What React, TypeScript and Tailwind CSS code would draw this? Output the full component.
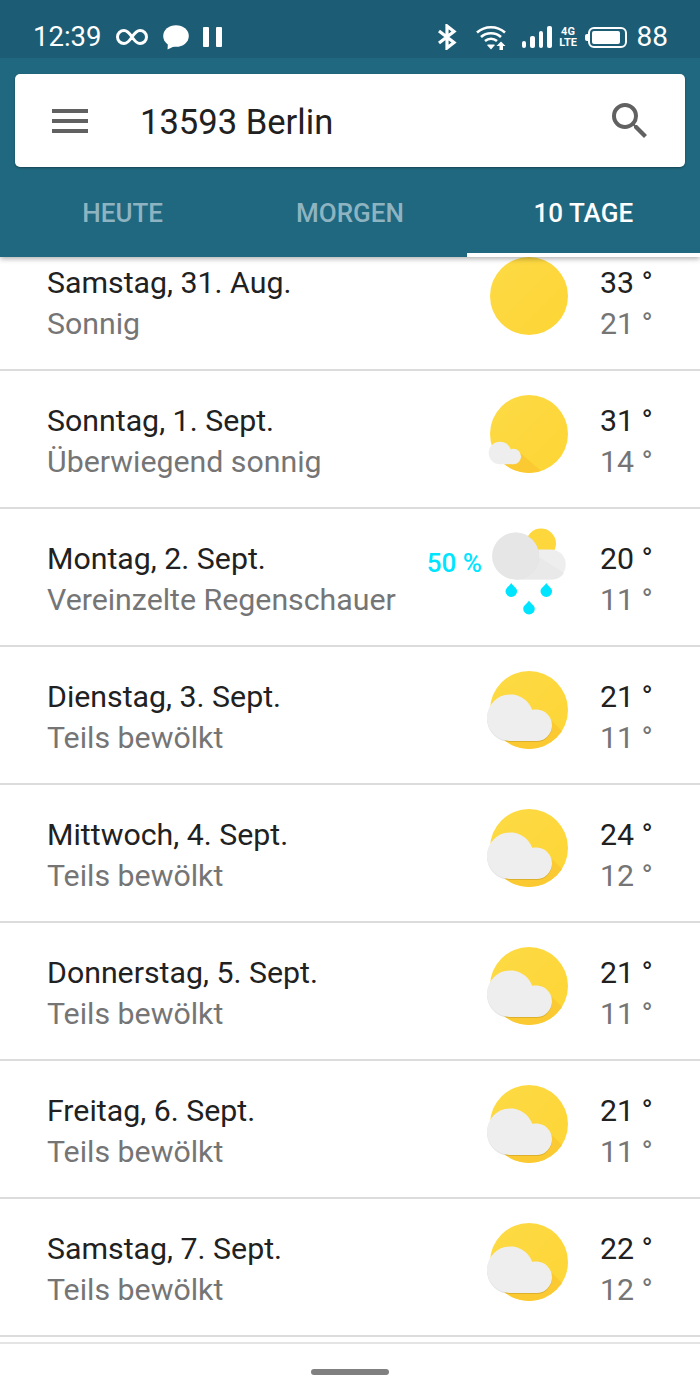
import React from "react";
import { MdMenu, MdSearch } from "react-icons/md";

const days = [
  { t: "Samstag, 31. Aug.", s: "Sonnig", hi: 33, lo: 21, k: "sun" },
  { t: "Sonntag, 1. Sept.", s: "Überwiegend sonnig", hi: 31, lo: 14, k: "mostly" },
  { t: "Montag, 2. Sept.", s: "Vereinzelte Regenschauer", hi: 20, lo: 11, k: "rain", p: "50 %" },
  { t: "Dienstag, 3. Sept.", s: "Teils bewölkt", hi: 21, lo: 11, k: "partly" },
  { t: "Mittwoch, 4. Sept.", s: "Teils bewölkt", hi: 24, lo: 12, k: "partly" },
  { t: "Donnerstag, 5. Sept.", s: "Teils bewölkt", hi: 21, lo: 11, k: "partly" },
  { t: "Freitag, 6. Sept.", s: "Teils bewölkt", hi: 21, lo: 11, k: "partly" },
  { t: "Samstag, 7. Sept.", s: "Teils bewölkt", hi: 22, lo: 12, k: "partly" },
];

function Drop({ x, y }: { x: number; y: number }) {
  return (
    <path
      d={`M${x} ${y - 7} C${x + 2} ${y - 3.5} ${x + 5.8} ${y - 2} ${x + 5.8} ${y + 1.2} A5.8 5.8 0 0 1 ${x - 5.8} ${y + 1.2} C${x - 5.8} ${y - 2} ${x - 2} ${y - 3.5} ${x} ${y - 7}Z`}
      fill="#00e5ff"
    />
  );
}

function Weather({ k, id }: { k: string; id: number }) {
  const grad = `g${id}`;
  const clip = `c${id}`;
  if (k === "rain") {
    return (
      <svg width="90" height="90" viewBox="0 0 90 90" className="shrink-0">
        <circle cx="61" cy="16.5" r="15" fill="#fdd73b" />
        <path d="M36 52.5H70.7A15 15 0 0 0 70.7 22.4H36Z" fill="#eeeeee" />
        <path d="M50 24 L84 46 A15 15 0 0 1 70.7 52.5 H36 Z" fill="#e9e9e9" />
        <circle cx="35.7" cy="29" r="23.5" fill="#e6e6e6" filter="drop-shadow(0.5px 0.5px 0.5px rgba(0,0,0,0.08))" />
        <Drop x={31.3} y={63} />
        <Drop x={66.3} y={63} />
        <Drop x={49} y={80.5} />
      </svg>
    );
  }
  return (
    <svg width="90" height="90" viewBox="0 0 90 90" className="shrink-0">
      <defs>
        <linearGradient id={grad} x1="0" y1="0" x2="1" y2="1">
          <stop offset="0" stopColor="#fdda45" />
          <stop offset="1" stopColor="#fdd535" />
        </linearGradient>
        <clipPath id={clip}>
          <circle cx="49" cy="45" r="39" />
        </clipPath>
      </defs>
      <circle cx="49" cy="45" r="39" fill={`url(#${grad})`} />
      {k === "mostly" && (
        <>
          <path clipPath={`url(#${clip})`} d="M36 60 L70 90 H30 L15 76Z" fill="#fbc932" />
          <circle cx="20" cy="64" r="11.3" fill="#eeeeee" />
          <circle cx="33.4" cy="67.5" r="7.7" fill="#eeeeee" />
          <rect x="20" y="66" width="13.4" height="9.2" fill="#eeeeee" />
        </>
      )}
      {k === "partly" && (
        <>
          <path clipPath={`url(#${clip})`} d="M60 44 L100 84 V100 H30 L25 76Z" fill="#fbc932" />
          <g filter="drop-shadow(0 1px 0.5px rgba(0,0,0,0.12))">
            <path
              d="M30.7 76 A23.3 23.3 0 1 1 52.2 44.8 A15.7 15.7 0 0 1 56.3 44.6 A15.7 15.7 0 0 1 56.3 76Z"
              fill="#eeeeee"
            />
          </g>
        </>
      )}
    </svg>
  );
}

function Row({ d, i }: { d: (typeof days)[number]; i: number }) {
  return (
    <div className="flex h-[138px] items-center border-b-2 border-[#dcdcdc] pl-[47px]">
      <div className="min-w-0 flex-1 whitespace-nowrap pt-[4px]">
        <div className="text-[30.3px] leading-[41px] text-[#212121]">{d.t}</div>
        <div className="text-[30.3px] leading-[42px] text-[#757575]">{d.s}</div>
      </div>
      {d.p && <div className="mb-[28px] mr-[-2px] text-[26px] font-medium text-[#00e5ff]">{d.p}</div>}
      <div className="mb-[11px] flex">
        <Weather k={d.k} id={i} />
      </div>
      <div className="ml-[30px] w-[100px] whitespace-nowrap pt-[4px]">
        <div className="text-[30.3px] leading-[41px] text-[#212121]">{d.hi} °</div>
        <div className="text-[30.3px] leading-[42px] text-[#757575]">{d.lo} °</div>
      </div>
    </div>
  );
}

function StatusBar() {
  return (
    <div className="flex h-[58px] items-center bg-[#1c5d75] pl-[33px] pr-[32px] pt-[16px] text-white">
      <span className="text-[27.5px] leading-none">12:39</span>
      <svg width="32" height="18" viewBox="0 0 32 18" className="ml-[15px]" fill="none" stroke="white" strokeWidth="3">
        <path d="M16 9C13 4.5 11 2.5 8 2.5A6.5 6.5 0 0 0 8 15.5C11 15.5 13 13.5 16 9C19 4.5 21 2.5 24 2.5A6.5 6.5 0 0 1 24 15.5C21 15.5 19 13.5 16 9Z" />
      </svg>
      <svg width="26" height="25" viewBox="0 0 26 25" className="ml-[15px]">
        <ellipse cx="13" cy="11" rx="12.8" ry="10.8" fill="white" />
        <path d="M5 17 L4.5 24.5 L14 20Z" fill="white" />
      </svg>
      <div className="ml-[14px] flex gap-[7px]">
        <div className="h-[20px] w-[6px] rounded-[1px] bg-white" />
        <div className="h-[20px] w-[6px] rounded-[1px] bg-white" />
      </div>
      <div className="flex-1" />
      <svg width="20" height="26" viewBox="0 0 20 26" className="mr-[19px]" fill="none" stroke="white" strokeWidth="3.2">
        <path d="M2 7L17 18.5L10 24V2L17 7.5L2 19" />
      </svg>
      <svg width="30" height="25" viewBox="0 0 30 25" className="mr-[16px]" fill="none" stroke="white" strokeWidth="2.6">
        <path d="M1 7.5C9 0.5 21 0.5 29 7.5" />
        <path d="M5 12C10.5 7 19.5 7 25 12" />
        <path d="M9 16C12.5 13 17.5 13 21 16" />
        <path d="M11 20L15 24.5L18.5 20.5V19.5H12Z" fill="white" stroke="none" />
        <path d="M25 16.5L29.5 21H27V25H23.5V21H20.5Z" fill="white" stroke="none" />
      </svg>
      <div className="mr-[8px] flex items-end gap-[4px]">
        <div className="h-[7px] w-[4.5px] rounded-[2px] bg-white" />
        <div className="h-[12px] w-[4.5px] rounded-[2px] bg-white" />
        <div className="h-[17px] w-[4.5px] rounded-[2px] bg-white" />
        <div className="h-[22px] w-[4.5px] rounded-[2px] bg-white" />
      </div>
      <div className="flex w-[17px] flex-col items-center text-[11px] font-bold leading-[11px]">
        <span>4G</span>
        <span>LTE</span>
      </div>
      <div className="ml-[8px] flex items-center">
        <div className="h-[7px] w-[3px] rounded-l-[2px] bg-white" />
        <div className="h-[21px] w-[39px] rounded-[6px] border-2 border-white p-[2px]">
          <div className="h-full w-[92%] rounded-[2px] bg-white" />
        </div>
      </div>
      <span className="ml-[10px] text-[28px] leading-none">88</span>
    </div>
  );
}

export default function App() {
  return (
    <div className="flex h-[1400px] w-[700px] flex-col overflow-hidden bg-white font-['Roboto',sans-serif]">
      <div className="relative z-10 shadow-[0_2px_5px_rgba(0,0,0,0.3)]">
        <StatusBar />
        <div className="bg-[#20687f] pt-[16px]">
          <div className="mx-[15px] flex h-[93px] items-center rounded-[5px] bg-white px-[31px] shadow-[0_1px_2px_rgba(0,0,0,0.35)]">
            <MdMenu size={48} color="#616161" />
            <span className="ml-[46px] flex-1 pt-[5px] text-[34.6px] text-[#212121]">13593 Berlin</span>
            <MdSearch size={48} color="#616161" />
          </div>
          <div className="grid h-[90px] grid-cols-3">
            <div className="flex items-center justify-center pl-[12px] pt-[3px] text-[26px] font-medium text-[#8fb4c1]">HEUTE</div>
            <div className="flex items-center justify-center pt-[3px] text-[26px] font-medium text-[#8fb4c1]">MORGEN</div>
            <div className="flex items-center justify-center border-b-4 border-white pt-[7px] text-[26px] font-medium text-white">
              10 TAGE
            </div>
          </div>
        </div>
      </div>
      <div className="min-h-0 flex-1 overflow-hidden">
        <div className="mt-[-24px]">
          {days.map((d, i) => (
            <Row key={i} d={d} i={i} />
          ))}
        </div>
        <div className="mt-[5px] flex h-[60px] items-start justify-center border-t-2 border-[#e4e4e4] pt-[25px]">
          <div className="h-[6px] w-[78px] rounded-[3px] bg-[#808080]" />
        </div>
      </div>
    </div>
  );
}
